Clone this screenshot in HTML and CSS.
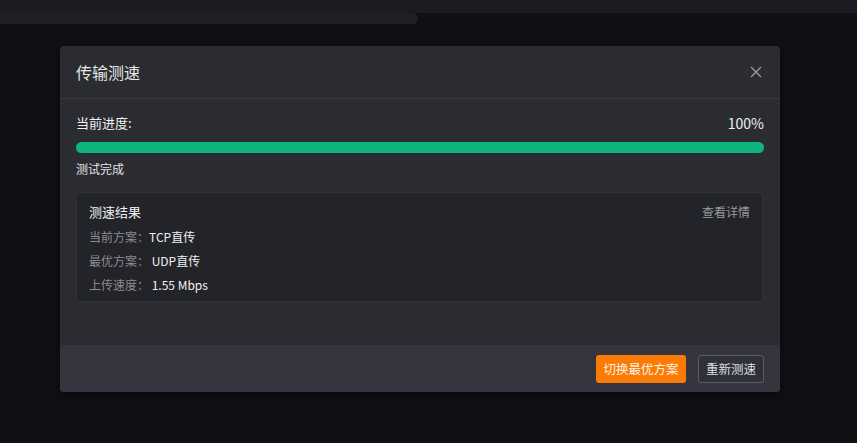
FILE: index.html
```html
<!DOCTYPE html>
<html lang="zh-CN">
<head>
<meta charset="utf-8">
<title>传输测速</title>
<link rel="stylesheet" href="styles.css">
</head>
<body>
<div class="topbar"></div>
<div class="subbar"></div>
<div class="modal">
  <div class="modal-header">
    <span class="modal-title">传输测速</span>
    <svg class="close" width="12" height="12" viewBox="0 0 12 12"><path d="M1 1L11 11M11 1L1 11" stroke="#9c9ca2" stroke-width="1.4" fill="none"/></svg>
  </div>
  <div class="modal-body">
    <div class="progress-row">
      <span class="progress-label">当前进度:</span>
      <span class="progress-value">100%</span>
    </div>
    <div class="progress-track"><div class="progress-fill" style="width:100%"></div></div>
    <div class="status">测试完成</div>
    <div class="card">
      <div class="card-head">
        <span class="card-title">测速结果</span>
        <span class="card-link">查看详情</span>
      </div>
      <div class="row"><span class="lbl">当前方案：</span><span class="val">TCP直传</span></div>
      <div class="row"><span class="lbl">最优方案：</span><span class="val">&nbsp;UDP直传</span></div>
      <div class="row"><span class="lbl">上传速度：</span><span class="val">&nbsp;1.55 Mbps</span></div>
    </div>
  </div>
  <div class="modal-footer">
    <button class="btn btn-primary">切换最优方案</button>
    <button class="btn btn-default">重新测速</button>
  </div>
</div>
</body>
</html>
```

FILE: styles.css
```css
html, body {
  margin: 0;
  padding: 0;
  background: #0f0f14;
  font-family: "Noto Sans CJK SC", "Noto Sans", sans-serif;
  height: 100%;
}
.topbar {
  height: 13px;
  background: #1b1b21;
}
.subbar {
  width: 418px;
  height: 11px;
  background: #1f1f26;
  border-radius: 0 6px 6px 0;
}
.modal {
  margin: 22px 0 0 60px;
  width: 720px;
  background: #2b2c31;
  border-radius: 4px;
  overflow: hidden;
  box-shadow: 0 2px 8px rgba(0,0,0,0.4);
}
.modal-header {
  height: 52px;
  border-bottom: 1px solid #393a40;
  display: flex;
  align-items: center;
  justify-content: space-between;
  padding: 0 18px 0 16px;
}
.modal-title {
  font-size: 16px;
  color: #e6e6e8;
  line-height: 20px;
}
.close { display: block; }
.modal-body {
  padding: 14px 16px 43px 16px;
}
.progress-row {
  display: flex;
  justify-content: space-between;
  line-height: 20px;
  font-size: 13px;
  color: #f2f2f2;
}
.progress-value { font-size: 14px; }
.progress-track {
  margin-top: 9px;
  height: 11px;
  border-radius: 6px;
  background: #1f5a45;
}
.progress-fill {
  height: 100%;
  border-radius: 6px;
  background: #10b57e;
}
.status {
  margin-top: 7px;
  font-size: 12px;
  line-height: 18px;
  color: #e2e2e4;
}
.card {
  margin-top: 14px;
  width: 687px;
  box-sizing: border-box;
  background: #232429;
  border: 1px solid #313238;
  border-radius: 5px;
  padding: 9px 12px 4px 12px;
}
.card-head {
  display: flex;
  justify-content: space-between;
  align-items: center;
  line-height: 20px;
  margin-bottom: 3px;
}
.card-title {
  font-size: 13px;
  color: #f0f0f2;
}
.card-link {
  font-size: 12px;
  color: #9a9ba0;
}
.row {
  font-size: 12px;
  line-height: 24px;
  display: flex;
}
.lbl { color: #8b8c92; }
.val { color: #f0f0f2; }
.modal-footer {
  height: 47px;
  background: #34353e;
  display: flex;
  justify-content: flex-end;
  align-items: center;
  gap: 12px;
  padding: 0 16px;
}
.btn {
  height: 28px;
  font-family: inherit;
  border-radius: 3px;
  padding: 0;
  cursor: pointer;
}
.btn-primary {
  width: 90px;
  font-size: 12.5px;
  background: #fb7c05;
  color: #fff2e6;
  border: none;
}
.btn-default {
  width: 66px;
  font-size: 12.5px;
  background: #2f3038;
  color: #dedee2;
  border: 1px solid #5b5c65;
}
```
